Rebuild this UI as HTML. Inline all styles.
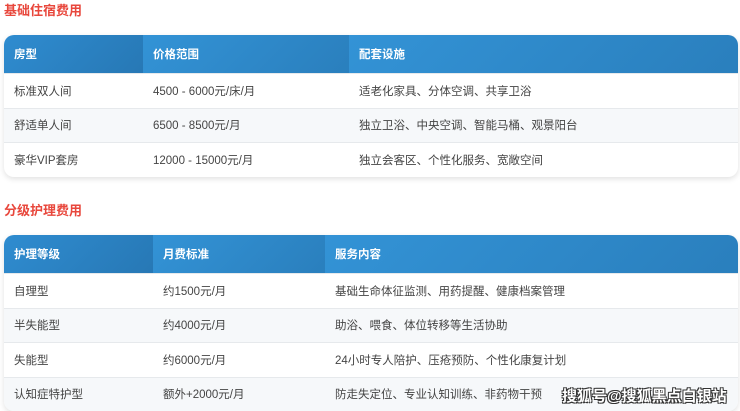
<!DOCTYPE html>
<html><head><meta charset="utf-8"><style>
*{margin:0;padding:0;box-sizing:border-box}
body{width:740px;height:411px;overflow:hidden;background:#fff;font-family:"Liberation Sans","Noto Sans CJK SC",sans-serif;position:relative}
.t{position:absolute;left:4px;color:#e8473c;font-weight:bold;font-size:13px}
table{position:absolute;left:4px;width:734px;border-collapse:separate;border-spacing:0;border-radius:10px;overflow:hidden;box-shadow:0 2px 6px rgba(0,0,0,.12);font-size:11.5px;color:#444}
th{height:38px;text-align:left;color:#fff;font-weight:bold;padding-left:10px;background:linear-gradient(135deg,#3393d6,#2a7fbd)}
th:first-child{background:linear-gradient(135deg,#2f8cd0,#2778b5)}
td{height:34.5px;padding-left:10px;border-top:1px solid #e6e9ec}
tr:nth-child(odd) td{background:#f6f8fa}
.wm{position:absolute;left:562px;top:385px;font-size:15px;font-weight:bold;color:#fff;text-shadow:-1px -1px 0 #333,1px -1px 0 #333,-1px 1px 0 #333,1px 1px 0 #333}
</style></head><body>
<div class="t" style="top:0px">基础住宿费用</div>
<table style="top:35px">
<tr><th style="width:139px">房型</th><th style="width:206px">价格范围</th><th>配套设施</th></tr>
<tr><td>标准双人间</td><td>4500 - 6000元/床/月</td><td>适老化家具、分体空调、共享卫浴</td></tr>
<tr><td>舒适单人间</td><td>6500 - 8500元/月</td><td>独立卫浴、中央空调、智能马桶、观景阳台</td></tr>
<tr><td>豪华VIP套房</td><td>12000 - 15000元/月</td><td>独立会客区、个性化服务、宽敞空间</td></tr>
</table>
<div class="t" style="top:200px">分级护理费用</div>
<table style="top:235px">
<tr><th style="width:149px">护理等级</th><th style="width:172px">月费标准</th><th>服务内容</th></tr>
<tr><td>自理型</td><td>约1500元/月</td><td>基础生命体征监测、用药提醒、健康档案管理</td></tr>
<tr><td>半失能型</td><td>约4000元/月</td><td>助浴、喂食、体位转移等生活协助</td></tr>
<tr><td>失能型</td><td>约6000元/月</td><td>24小时专人陪护、压疮预防、个性化康复计划</td></tr>
<tr><td>认知症特护型</td><td>额外+2000元/月</td><td>防走失定位、专业认知训练、非药物干预</td></tr>
</table>
<div class="wm">搜狐号@搜狐黑点白银站</div>
</body></html>
